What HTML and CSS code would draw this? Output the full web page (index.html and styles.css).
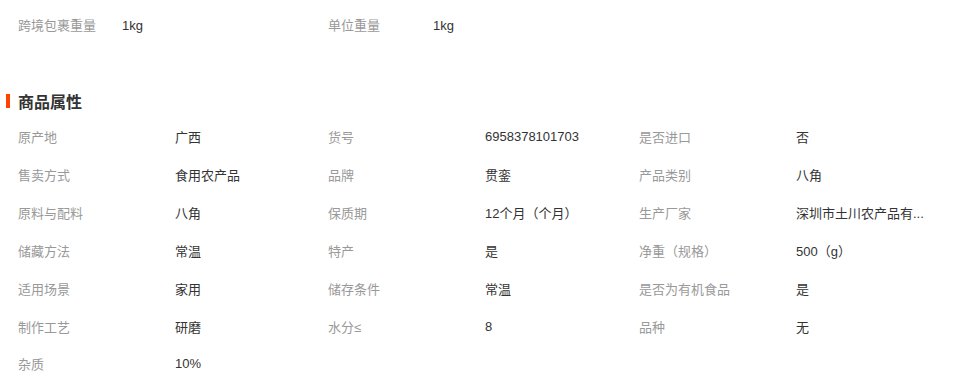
FILE: index.html
```html
<!DOCTYPE html>
<html lang="zh-CN">
<head>
<meta charset="utf-8">
<title>商品属性</title>
<link rel="stylesheet" href="styles.css">
</head>
<body>
<div class="page">
  <div class="pack-row">
    <span class="label pack-label">跨境包裹重量</span>
    <span class="value pack-value">1kg</span>
    <span class="label pack-label2">单位重量</span>
    <span class="value">1kg</span>
  </div>

  <h2 class="section-title"><span class="bar"></span>商品属性</h2>

  <div class="attrs">
    <span class="label">原产地</span><span class="value">广西</span>
    <span class="label">货号</span><span class="value">6958378101703</span>
    <span class="label">是否进口</span><span class="value">否</span>

    <span class="label">售卖方式</span><span class="value">食用农产品</span>
    <span class="label">品牌</span><span class="value">贯銮</span>
    <span class="label">产品类别</span><span class="value">八角</span>

    <span class="label">原料与配料</span><span class="value">八角</span>
    <span class="label">保质期</span><span class="value">12个月（个月）</span>
    <span class="label">生产厂家</span><span class="value" title="深圳市土川农产品有限公司">深圳市土川农产品有...</span>

    <span class="label">储藏方法</span><span class="value">常温</span>
    <span class="label">特产</span><span class="value">是</span>
    <span class="label">净重（规格）</span><span class="value">500（g）</span>

    <span class="label">适用场景</span><span class="value">家用</span>
    <span class="label">储存条件</span><span class="value">常温</span>
    <span class="label">是否为有机食品</span><span class="value">是</span>

    <span class="label">制作工艺</span><span class="value">研磨</span>
    <span class="label">水分≤</span><span class="value">8</span>
    <span class="label">品种</span><span class="value">无</span>

    <span class="label">杂质</span><span class="value">10%</span>
  </div>
</div>
</body>
</html>
```

FILE: styles.css
```css
html, body {
  margin: 0;
  padding: 0;
  background: #ffffff;
}

body {
  font-family: "Liberation Sans", "Noto Sans CJK SC", sans-serif;
  font-size: 13px;
  color: #333333;
}

.page {
  padding: 14px 0 0 0;
}

.label {
  color: #999999;
  white-space: nowrap;
}

.value {
  color: #333333;
  white-space: nowrap;
}

.pack-row {
  display: flex;
  height: 24px;
  line-height: 24px;
  padding-left: 18px;
}

.pack-label {
  width: 104px;
}

.pack-value {
  width: 206px;
}

.pack-label2 {
  width: 105px;
}

.section-title {
  display: flex;
  align-items: center;
  gap: 8px;
  margin: 51px 0 0 0;
  padding-left: 6px;
  height: 24px;
  font-size: 16px;
  font-weight: bold;
  color: #333333;
}

.bar {
  display: block;
  width: 4px;
  height: 14px;
  background: #ff4400;
}

.attrs {
  display: grid;
  grid-template-columns: 157px 153px 157px 154px 157px 1fr;
  grid-auto-rows: 37.83px;
  align-items: center;
  margin-top: 5px;
  padding-left: 18px;
}
```
